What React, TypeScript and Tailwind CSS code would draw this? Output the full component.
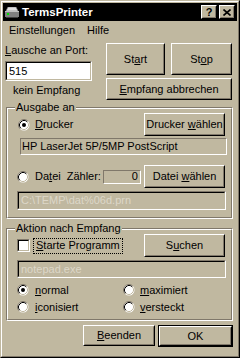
import React from "react";

// Win95 style dialog, tan colour scheme
function Raised({
  className = "",
  children,
}: {
  className?: string;
  children?: React.ReactNode;
}) {
  return (
    <div
      className={`border border-t-white border-l-white border-r-black border-b-black ${className}`}
    >
      <div className="h-full w-full border border-t-[#c0b8a0] border-l-[#c0b8a0] border-r-[#80786a] border-b-[#80786a] flex items-center justify-center">
        <span className="whitespace-pre">{children}</span>
      </div>
    </div>
  );
}

function Sunken({
  className = "",
  inner = "",
  children,
}: {
  className?: string;
  inner?: string;
  children?: React.ReactNode;
}) {
  return (
    <div
      className={`border border-t-[#80786a] border-l-[#80786a] border-r-white border-b-white ${className}`}
    >
      <div
        className={`h-full w-full border border-t-black border-l-black border-r-[#c0b8a0] border-b-[#c0b8a0] flex items-center ${inner}`}
      >
        {children && <span>{children}</span>}
      </div>
    </div>
  );
}

function Radio({ checked }: { checked?: boolean }) {
  return (
    <svg width="12" height="12" viewBox="0 0 12 12" className="shrink-0">
      <circle cx="6" cy="6" r="5.5" fill="#fff" />
      <path d="M2.11 9.89A5.5 5.5 0 0 1 9.89 2.11" fill="none" stroke="#80786a" />
      <path d="M2.82 9.18A4.5 4.5 0 0 1 9.18 2.82" fill="none" stroke="#000" />
      <path d="M9.18 2.82A4.5 4.5 0 0 1 2.82 9.18" fill="none" stroke="#c0b8a0" />
      {checked && <circle cx="6" cy="6" r="2" fill="#000" />}
    </svg>
  );
}

function Group({
  title,
  className = "",
  children,
}: {
  title: string;
  className?: string;
  children: React.ReactNode;
}) {
  return (
    <div
      className={`relative border border-t-[#80786a] border-l-[#80786a] border-r-white border-b-white ${className}`}
    >
      <div className="h-full border border-t-white border-l-white border-r-[#80786a] border-b-[#80786a] flex flex-col">
        {children}
      </div>
      <span className="absolute left-[8px] top-[-7px] px-px bg-[#c0b8a0] leading-[13px]">
        {title}
      </span>
    </div>
  );
}

const U = ({ children }: { children: React.ReactNode }) => (
  <span className="underline">{children}</span>
);

export default function App() {
  return (
    <div className="w-[240px] h-[358px] border border-t-[#c0b8a0] border-l-[#c0b8a0] border-r-black border-b-black font-['Liberation_Sans',Arial,sans-serif] text-[11px] leading-[13px] text-black">
      <div className="h-full border border-t-white border-l-white border-r-[#80786a] border-b-[#80786a] bg-[#c0b8a0] p-px flex flex-col">
        {/* title bar */}
        <div className="h-[18px] bg-black flex items-center pl-[2px] pr-[2px]">
          <svg width="14" height="11" viewBox="0 0 14 11" className="shrink-0">
            <path d="M3 0h8l2 4H1z" fill="#e0e0e0" />
            <path d="M3 0h8l2 4H1z" fill="none" stroke="#808080" strokeWidth="0.6" />
            <rect x="0" y="4" width="14" height="6" fill="#808080" />
            <rect x="0" y="4" width="14" height="1" fill="#c0c0c0" />
            <rect x="1" y="10" width="12" height="1" fill="#404040" />
            <rect x="2" y="6" width="2" height="2" fill="#00e000" />
          </svg>
          <span className="ml-[3px] text-white font-bold text-[11.5px]">TermsPrinter</span>
          <Raised className="ml-auto w-[16px] h-[14px] bg-[#c0b8a0]">
            <span className="font-bold text-[11px] leading-[10px]">?</span>
          </Raised>
          <Raised className="ml-[2px] w-[16px] h-[14px] bg-[#c0b8a0]">
            <svg width="8" height="7" viewBox="0 0 8 7" className="block">
              <path d="M0.5 0.5L7.5 6.5M7.5 0.5L0.5 6.5" stroke="#000" strokeWidth="1.6" />
            </svg>
          </Raised>
        </div>

        {/* menu */}
        <div className="h-[18px] flex items-center">
          <span className="px-[6px]">Einstellungen</span>
          <span className="px-[6px]">Hilfe</span>
        </div>

        {/* port row */}
        <div className="flex mt-[4px]">
          <div className="ml-[2px] w-[87px] flex flex-col">
            <span className="mt-px">
              <U>L</U>ausche an Port:
            </span>
            <Sunken className="mt-[4px] h-[20px] bg-white" inner="pl-[2px]">
              515
            </Sunken>
            <span className="mt-[3px] pl-[8px]">kein Empfang</span>
          </div>
          <div className="ml-[14px] flex flex-col">
            <div className="flex gap-[6px]">
              <Raised className="w-[59px] h-[32px]">
                St<U>a</U>rt
              </Raised>
              <Raised className="w-[61px] h-[32px]">
                St<U>o</U>p
              </Raised>
            </div>
            <Raised className="mt-[3px] w-[126px] h-[22px]">
              <U>E</U>mpfang abbrechen
            </Raised>
          </div>
        </div>

        {/* Ausgabe an */}
        <Group title="Ausgabe an" className="mt-[7px] ml-[3px] w-[227px] h-[112px]">
          <div className="mt-[4px] h-[23px] flex items-center pl-[10px] pr-[6px]">
            <Radio checked />
            <span className="ml-[5px]">
              <U>D</U>rucker
            </span>
            <Raised className="ml-auto w-[81px] h-[23px]">
              Drucker <U>w</U>ählen
            </Raised>
          </div>
          <div className="mt-[2px] ml-[12px] w-[207px] h-[17px] border border-t-[#80786a] border-l-[#80786a] border-r-white border-b-white pl-px flex items-center">
            HP LaserJet 5P/5MP PostScript
          </div>
          <div className="mt-[10px] h-[23px] flex items-center pl-[9px] pr-[6px]">
            <Radio />
            <span className="ml-[6px]">
              Da<U>t</U>ei
            </span>
            <span className="ml-[6px]">Zähler:</span>
            <div className="ml-[2px] w-[38px] h-[14px] border border-t-[#80786a] border-l-[#80786a] border-r-white border-b-white flex items-center justify-end pr-[2px]">
              0
            </div>
            <Raised className="ml-auto w-[81px] h-[23px]">
              Datei <U>w</U>ählen
            </Raised>
          </div>
          <Sunken className="mt-[3px] ml-[9px] w-[209px] h-[19px]" inner="pl-[2px] text-[#ddd7c8]">
            C:\TEMP\dat%06d.prn
          </Sunken>
        </Group>

        {/* Aktion nach Empfang */}
        <Group title="Aktion nach Empfang" className="mt-[9px] ml-[3px] w-[227px] h-[93px]">
          <div className="mt-[4px] h-[23px] flex items-center pl-[9px] pr-[6px]">
            <Sunken className="w-[13px] h-[13px] bg-white" />
            <span className="ml-[3px] px-[2px] h-[16px] flex items-center border border-dotted border-black">
              <span>
                <U>S</U>tarte Programm
              </span>
            </span>
            <Raised className="ml-auto w-[81px] h-[23px]">
              S<U>u</U>chen
            </Raised>
          </div>
          <Sunken className="mt-[3px] ml-[9px] w-[209px] h-[18px]" inner="pl-[2px] text-[#ddd7c8]">
            notepad.exe
          </Sunken>
          <div className="mt-[6px] pl-[9px] grid grid-cols-[106px_1fr] gap-y-[5px]">
            <div className="h-[12px] flex items-center gap-[6px]">
              <Radio checked />
              <span>
                <U>n</U>ormal
              </span>
            </div>
            <div className="h-[12px] flex items-center gap-[5px]">
              <Radio />
              <span>
                <U>m</U>aximiert
              </span>
            </div>
            <div className="h-[12px] flex items-center gap-[6px]">
              <Radio />
              <span>
                <U>i</U>conisiert
              </span>
            </div>
            <div className="h-[12px] flex items-center gap-[5px]">
              <Radio />
              <span>
                <U>v</U>ersteckt
              </span>
            </div>
          </div>
        </Group>

        {/* bottom buttons */}
        <div className="mt-[4px] flex justify-end gap-[3px] pr-[4px]">
          <Raised className="w-[72px] h-[21px]">
            <U>B</U>eenden
          </Raised>
          <div className="w-[75px] h-[22px] border border-black">
            <Raised className="h-full w-full">OK</Raised>
          </div>
        </div>
      </div>
    </div>
  );
}
